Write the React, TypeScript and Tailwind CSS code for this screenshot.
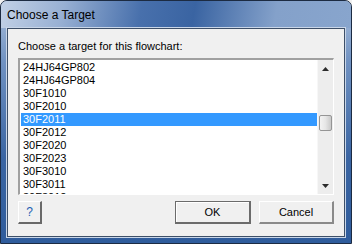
import React from 'react';

const items = [
  '24HJ64GP802',
  '24HJ64GP804',
  '30F1010',
  '30F2010',
  '30F2011',
  '30F2012',
  '30F2020',
  '30F2023',
  '30F3010',
  '30F3011',
  '30F3012',
];

const selected = '30F2011';

const App = () => {
  return (
    <div className="w-[352px] h-[244px] bg-[#f0f0f0]" style={{ fontFamily: '"Liberation Sans", Arial, sans-serif' }}>
      {/* Window frame */}
      <div className="w-[352px] h-[244px] flex flex-col rounded-t-[7px] border border-[#1c2b42] bg-[linear-gradient(180deg,#adc1dc_0%,#7092c2_25%,#3a65a3_65%,#2f5c9c_100%)] overflow-hidden">
        {/* Title bar */}
        <div className="h-[28px] flex items-center px-[7px] -mx-px -mt-px rounded-t-[7px] bg-[linear-gradient(100deg,#c2d1e6_0%,#98b0d3_18%,#4870ac_40%,#3a64a2_55%,#84a1ca_78%,#88a5cd_100%)]">
          <span className="text-[12px] text-black pt-[1px]">Choose a Target</span>
        </div>

        {/* Client area */}
        <div className="flex-1 mx-[6px] mb-[6px] border border-[#3d4f68] bg-[#f0f0f0] flex flex-col px-[10px] shadow-[0_0_0_1px_#c9d6e8]">
          <div className="h-[29px] flex items-center pt-[5px] text-[11px] text-black">
            Choose a target for this flowchart:
          </div>

          {/* List box */}
          <div className="h-[137px] flex border-t-2 border-l-2 border-t-[#a0a0a0] border-l-[#a0a0a0] border-b border-r border-b-[#ffffff] border-r-[#ffffff] shadow-[inset_1px_1px_0_#696969]">
            <div className="flex-1 bg-white overflow-hidden pt-[1px] pl-[1px]">
              {items.map((item) => (
                <div
                  key={item}
                  className={`h-[13px] leading-[13px] text-[11px] pl-[2px] ${
                    item === selected ? 'bg-[#3399ff] text-white' : 'text-black'
                  }`}
                >
                  {item}
                </div>
              ))}
            </div>

            {/* Scrollbar */}
            <div className="w-[16px] bg-[#ededed] flex flex-col border-l border-[#f7f7f7]">
              <div className="h-[17px] flex items-center justify-center">
                <svg width="7" height="4" viewBox="0 0 7 4">
                  <polygon points="3.5,0 7,4 0,4" fill="#2b2b2b" />
                </svg>
              </div>
              <div className="h-[38px]" />
              <div className="h-[16px] mx-[1px] rounded-[2px] border border-[#959595] bg-[linear-gradient(90deg,#f3f3f3_0%,#e6e6e6_50%,#c9c9c9_100%)]" />
              <div className="flex-1" />
              <div className="h-[17px] flex items-center justify-center">
                <svg width="7" height="4" viewBox="0 0 7 4">
                  <polygon points="0,0 7,0 3.5,4" fill="#2b2b2b" />
                </svg>
              </div>
            </div>
          </div>

          {/* Buttons */}
          <div className="flex items-start mt-[6px] text-[11px] text-black">
            <button className="w-[24px] h-[23px] bg-[#f0f0f0] border-t border-l border-t-white border-l-white border-b-2 border-r-2 border-b-[#696969] border-r-[#696969] text-[12px] text-[#1f5fb4] flex items-center justify-center">
              ?
            </button>
            <div className="flex-1" />
            <button className="w-[76px] h-[23px] bg-[#f0f0f0] border border-[#6b6b6b] border-b-2 border-r-2 flex items-center justify-center shadow-[inset_1px_1px_0_#ffffff]">
              OK
            </button>
            <button className="w-[75px] h-[23px] ml-[8px] bg-[#f0f0f0] border-t border-l border-t-white border-l-white border-b-2 border-r-2 border-b-[#8a8a8a] border-r-[#8a8a8a] flex items-center justify-center">
              Cancel
            </button>
          </div>
        </div>
      </div>
    </div>
  );
};

export default App;
